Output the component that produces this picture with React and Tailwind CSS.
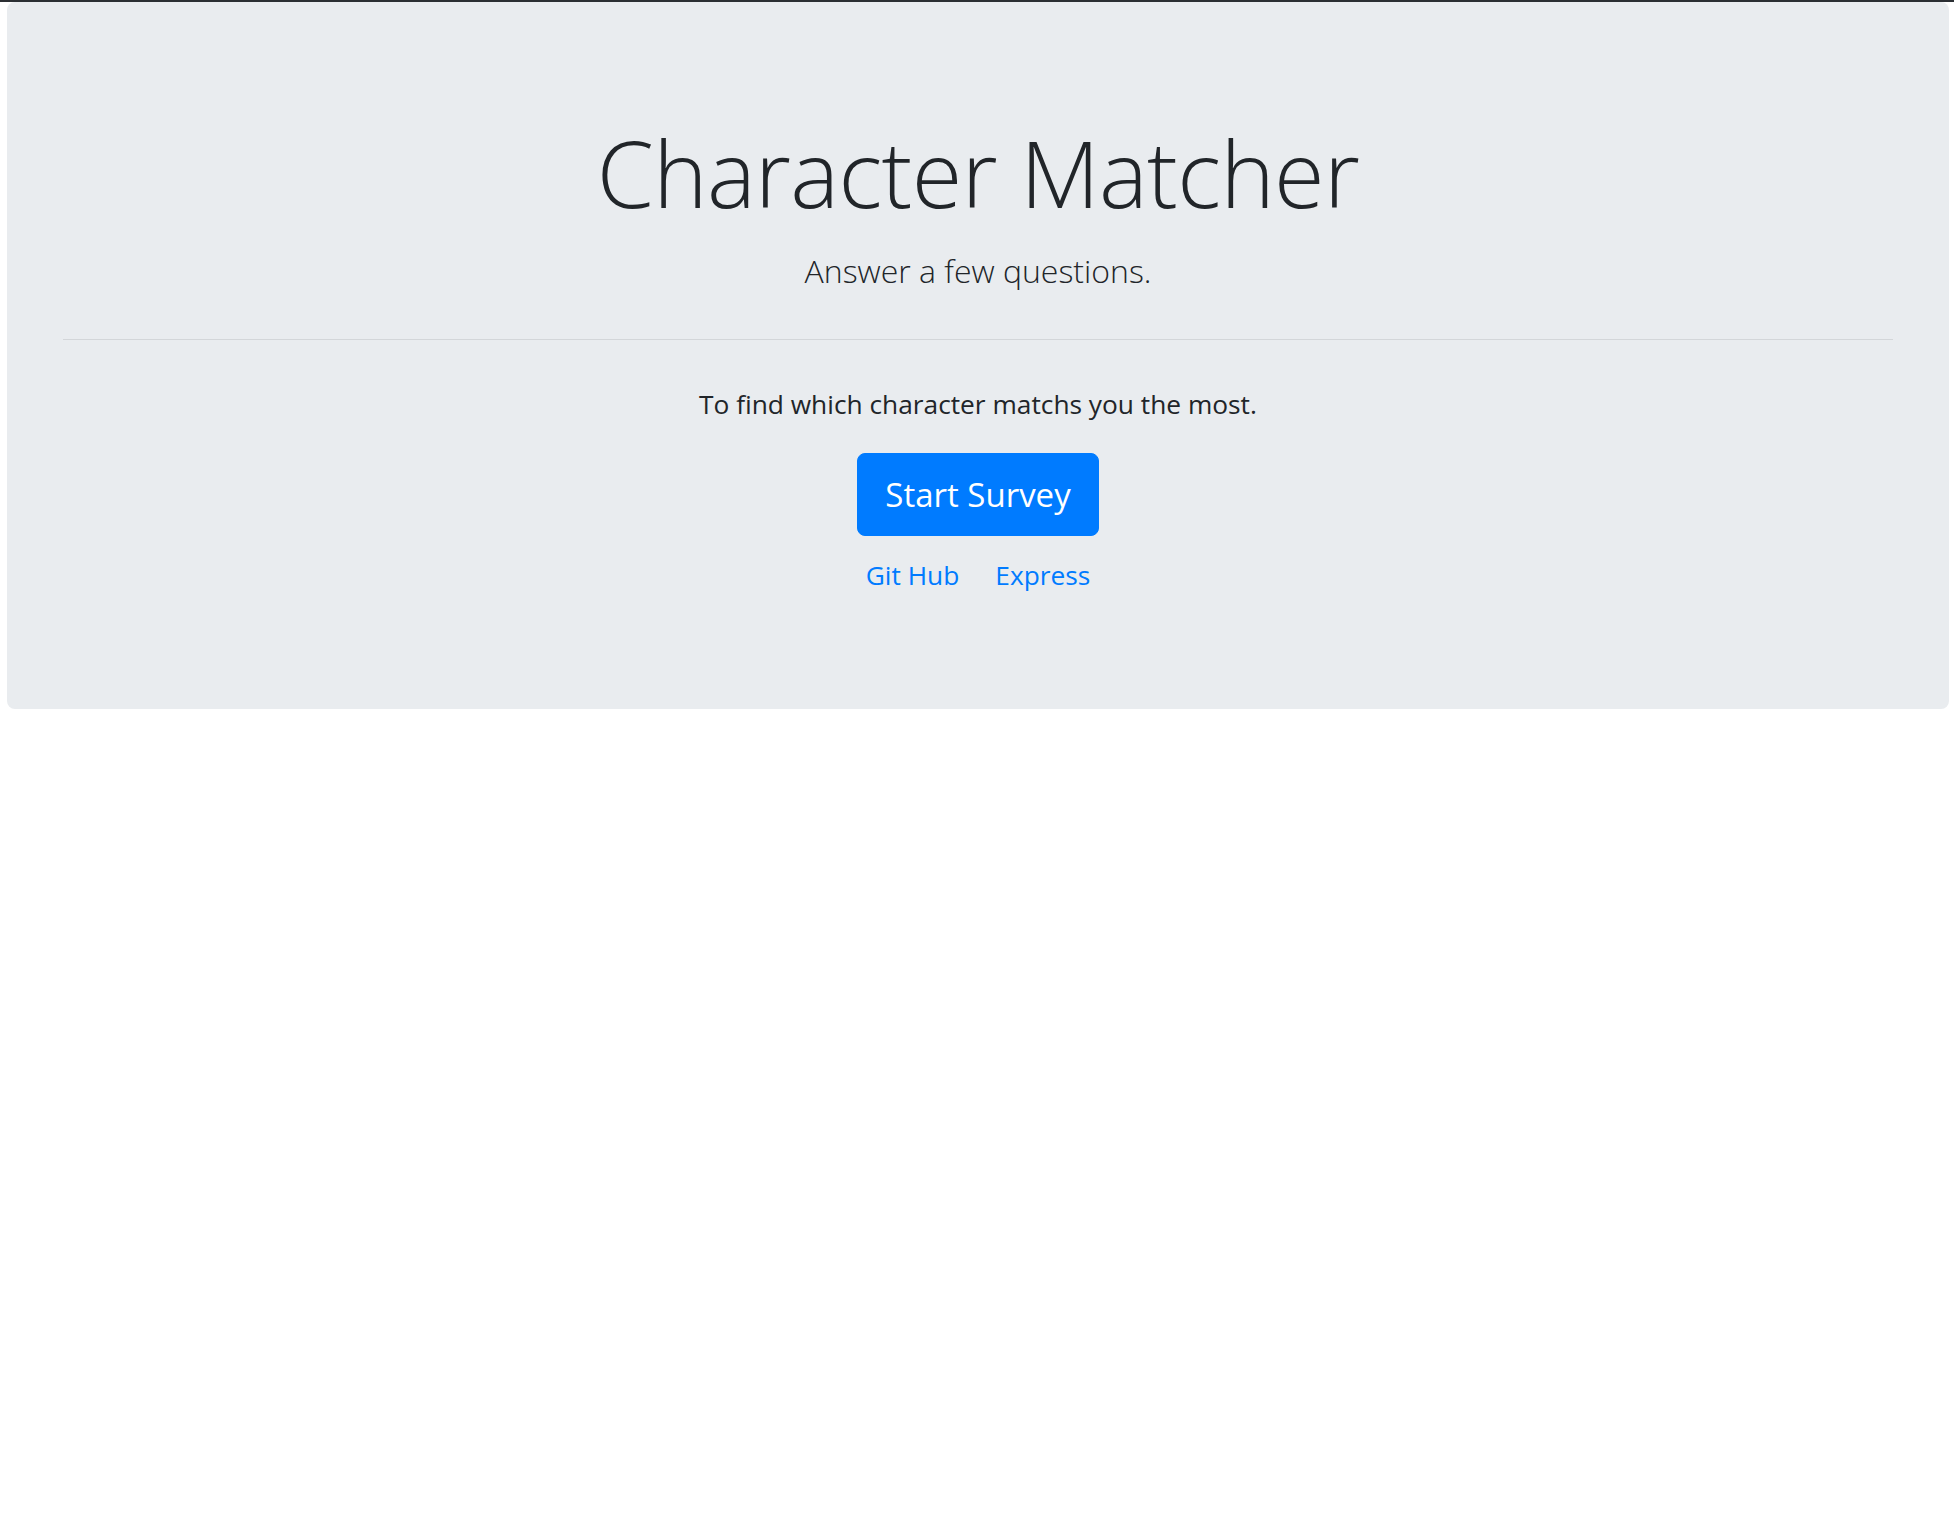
import React from "react";

const App = () => {
  return (
    <div
      className="min-h-screen bg-white border-t-2 border-[#2b2f33] text-[#212529]"
      style={{ fontFamily: '"Open Sans", "Noto Sans", sans-serif' }}
    >
      <div className="ml-[7px] mr-[5px] bg-[#e9ecef] rounded-[8px] px-[56px] pt-[112px] pb-[113px] text-center">
        <h1 className="text-[92px] leading-[117px] font-light tracking-[-0.6px] mb-[14px]">
          Character Matcher
        </h1>
        <p className="text-[32px] leading-[52px] font-light">Answer a few questions.</p>
        <hr className="my-[42px] border-0 border-t border-[#d3d6d9]" />
        <p className="text-[26.3px] leading-[42px] mt-[43px] mb-[28px]">
          To find which character matchs you the most.
        </p>
        <div className="flex justify-center">
          <button
            type="button"
            className="h-[83px] w-[242px] bg-[#007bff] border border-[#007bff] text-white text-[33px] leading-[52px] rounded-[8px]"
          >
            Start Survey
          </button>
        </div>
        <div className="flex justify-center gap-[36px] mt-[18px] text-[26.3px] leading-[42px] text-[#007bff]">
          <a href="#">Git Hub</a>
          <a href="#">Express</a>
        </div>
      </div>
    </div>
  );
};

export default App;
